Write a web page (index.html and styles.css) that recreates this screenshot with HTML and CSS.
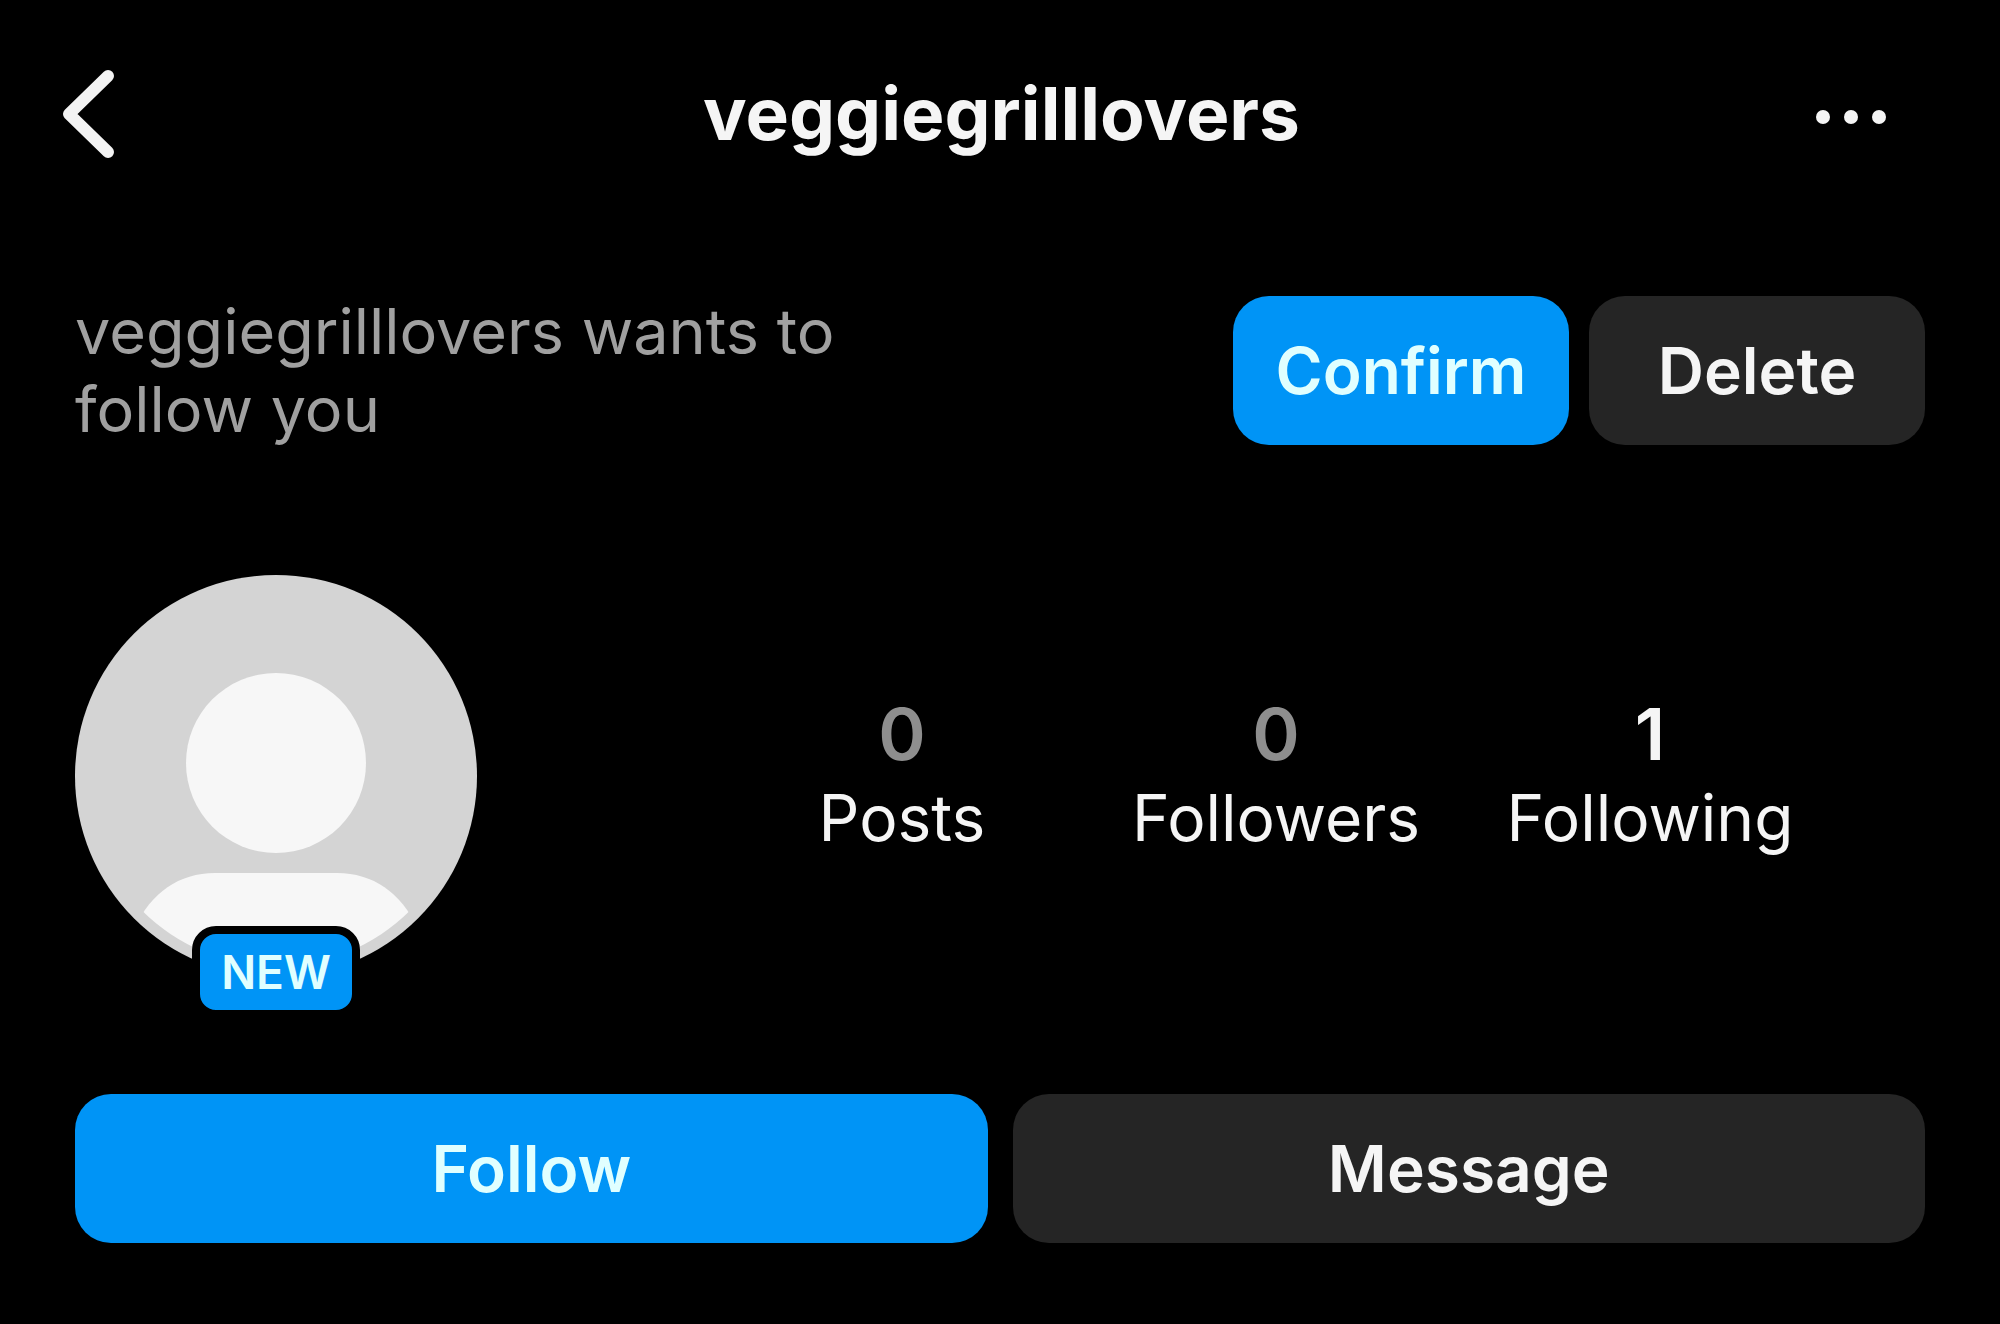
FILE: index.html
```html
<!DOCTYPE html>
<html lang="en">
<head>
<meta charset="utf-8">
<meta name="viewport" content="width=device-width, initial-scale=1">
<title>veggiegrilllovers</title>
<link rel="stylesheet" href="styles.css">
</head>
<body>
<header class="topbar">
  <button class="icon-button back" type="button" aria-label="Back">
    <svg width="56" height="92" viewBox="0 0 56 92" fill="none" stroke="#f3f3f3" stroke-width="12" stroke-linecap="round" stroke-linejoin="round"><path d="M48 8 9 46 48 84"/></svg>
  </button>
  <h1 class="title">veggiegrilllovers</h1>
  <button class="icon-button more" type="button" aria-label="More options">
    <svg width="72" height="16" viewBox="0 0 72 16" fill="#f5f5f5"><circle cx="8" cy="8" r="7"/><circle cx="36" cy="8" r="7"/><circle cx="64" cy="8" r="7"/></svg>
  </button>
</header>
<main class="profile">
  <section class="request">
    <p class="request-text">veggiegrilllovers wants to follow you</p>
    <div class="request-actions">
      <button class="button primary" type="button">Confirm</button>
      <button class="button secondary" type="button">Delete</button>
    </div>
  </section>
  <section class="summary">
    <div class="avatar">
      <svg class="avatar-image" viewBox="0 0 402 402" role="img" aria-label="Profile picture">
        <defs><clipPath id="round"><circle cx="201" cy="201" r="190"/></clipPath></defs>
        <circle cx="201" cy="201" r="201" fill="#d4d4d4"/>
        <circle cx="201" cy="188" r="90" fill="#f7f7f7"/>
        <path d="M60 352C76 318 104 298 140 298H262C298 298 326 318 342 352V402H60Z" fill="#f7f7f7" clip-path="url(#round)"/>
      </svg>
      <span class="badge">NEW</span>
    </div>
    <ul class="stats">
      <li class="stat"><span class="count empty">0</span><span class="label">Posts</span></li>
      <li class="stat"><span class="count empty">0</span><span class="label">Followers</span></li>
      <li class="stat"><span class="count">1</span><span class="label">Following</span></li>
    </ul>
  </section>
  <section class="actions">
    <button class="button primary" type="button">Follow</button>
    <button class="button secondary" type="button">Message</button>
  </section>
</main>
</body>
</html>
```

FILE: styles.css
```css
* {
  box-sizing: border-box;
}

body {
  margin: 0;
  background: #000;
  color: #f5f5f5;
  font-family: Inter, "Liberation Sans", sans-serif;
}

.topbar {
  display: grid;
  grid-template-columns: 72px 1fr 72px;
  align-items: center;
  padding: 64px 113px 0 60px;
}

.icon-button {
  display: flex;
  padding: 0;
  border: 0;
  background: none;
}

.more {
  padding-top: 6px;
}

.title {
  margin: 0;
  padding-left: 56px;
  font-size: 73px;
  line-height: 100px;
  font-weight: 700;
  text-align: center;
}

.profile {
  padding: 128px 75px 75px;
}

.request {
  display: flex;
  justify-content: space-between;
  align-items: center;
}

.request-text {
  width: 800px;
  margin: 0;
  color: #a0a0a0;
  font-size: 63px;
  line-height: 78px;
}

.request-actions {
  display: flex;
  gap: 20px;
}

.button {
  height: 149px;
  padding: 0;
  border: 0;
  border-radius: 36px;
  color: #f5f5f5;
  font-family: inherit;
  font-size: 64px;
  font-weight: 600;
}

.request-actions .button {
  width: 336px;
}

.primary {
  background: #0094f6;
  color: #e0ffff;
}

.secondary {
  background: #252525;
}

.summary {
  display: flex;
  align-items: center;
  justify-content: space-between;
  margin-top: 127px;
}

.avatar {
  position: relative;
  width: 402px;
  height: 402px;
}

.avatar-image {
  display: block;
  width: 100%;
}

.badge {
  position: absolute;
  left: 50%;
  bottom: -41px;
  width: 168px;
  padding: 8px 0;
  transform: translateX(-50%);
  border: 8px solid #000;
  border-radius: 24px;
  background: #0094f6;
  color: #e0ffff;
  font-size: 46px;
  line-height: 60px;
  font-weight: 600;
  text-align: center;
}

.stats {
  display: grid;
  grid-template-columns: repeat(3, 374px);
  margin: 0 88px 0 0;
  padding: 0;
  list-style: none;
}

.stat {
  text-align: center;
}

.count,
.label {
  display: block;
}

.count {
  font-size: 72px;
  line-height: 84px;
  font-weight: 600;
}

.empty {
  color: #8e8e8e;
}

.label {
  font-size: 64px;
  line-height: 84px;
}

.actions {
  display: grid;
  grid-template-columns: 1fr 1fr;
  gap: 25px;
  margin-top: 117px;
}
```
